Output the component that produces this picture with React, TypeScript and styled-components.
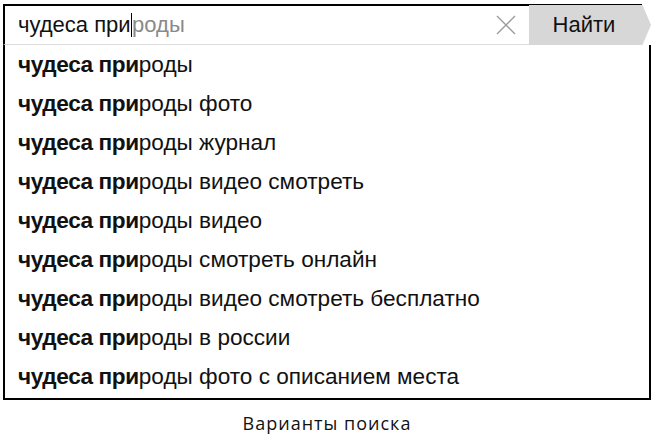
import React from "react";
import styled, { createGlobalStyle } from "styled-components";

const Global = createGlobalStyle`
  html, body { margin: 0; padding: 0; background: #fff; }
  body { font-family: "Liberation Sans", Arial, sans-serif; }
`;

const Page = styled.div`
  width: 659px;
  height: 446px;
  padding: 4px 0 0 3px;
  box-sizing: border-box;
`;

const Frame = styled.div`
  width: 648px;
  display: flex;
  flex-direction: column;
`;

const Header = styled.div`
  display: flex;
  height: 41px;
  width: 639px;
  border-top: 2px solid #000;
  box-sizing: border-box;
`;

const InputBox = styled.div`
  flex: 1;
  display: flex;
  align-items: center;
  border-left: 2px solid #000;
  border-bottom: 1px solid #dcdcdc;
  padding: 0 12px 0 13px;
  font-size: 22px;
  color: #111;
`;

const Typed = styled.span`
  color: #111;
`;

const Caret = styled.span`
  display: inline-block;
  width: 1.5px;
  height: 24px;
  background: #000;
  vertical-align: -5px;
`;

const Hint = styled.span`
  color: #8a8a8a;
`;

const Text = styled.div`
  flex: 1;
  white-space: nowrap;
`;

const Clear = styled.button`
  border: none;
  background: none;
  padding: 0;
  width: 22px;
  height: 22px;
  display: flex;
  align-items: center;
  justify-content: center;
  cursor: pointer;
`;

const FindButton = styled.button`
  width: 122px;
  margin: -1px -9px 0 0;
  border: none;
  background: #d7d7d7;
  clip-path: polygon(0 0, 93% 0, 100% 50%, 93% 100%, 0 100%);
  font-family: "Liberation Sans", Arial, sans-serif;
  font-size: 22px;
  color: #111;
  padding: 0 12px 0 0;
  text-align: center;
`;

const List = styled.ul`
  list-style: none;
  margin: 0;
  padding: 1px 0 2px 13px;
  width: 648px;
  box-sizing: border-box;
  border: 2px solid #000;
  border-top: none;
`;

const Row = styled.li`
  height: 38.9px;
  display: flex;
  align-items: center;
  font-size: 22.6px;
  color: #111;
  white-space: pre;
`;

const Strong = styled.b`
  font-weight: 700;
  letter-spacing: -0.4px;
`;

const Caption = styled.div`
  margin-top: 11px;
  width: 648px;
  text-align: center;
  font-family: "Open Sans", sans-serif;
  font-size: 18px;
  letter-spacing: 1px;
  color: #111;
`;

const suffixes = [
  "",
  " фото",
  " журнал",
  " видео смотреть",
  " видео",
  " смотреть онлайн",
  " видео смотреть бесплатно",
  " в россии",
  " фото с описанием места",
];

export default function App() {
  return (
    <Page>
      <Global />
      <Frame>
        <Header>
          <InputBox>
            <Text>
              <Typed>чудеса при</Typed>
              <Caret />
              <Hint>роды</Hint>
            </Text>
            <Clear aria-label="Очистить">
              <svg width="20" height="20" viewBox="0 0 20 20">
                <path d="M1 1 L19 19 M19 1 L1 19" stroke="#9a9a9a" strokeWidth="1.3" fill="none" />
              </svg>
            </Clear>
          </InputBox>
          <FindButton>Найти</FindButton>
        </Header>
        <List>
          {suffixes.map((s, i) => (
            <Row key={i}>
              <Strong>чудеса при</Strong>
              <span>роды{s}</span>
            </Row>
          ))}
        </List>
        <Caption>Варианты поиска</Caption>
      </Frame>
    </Page>
  );
}
